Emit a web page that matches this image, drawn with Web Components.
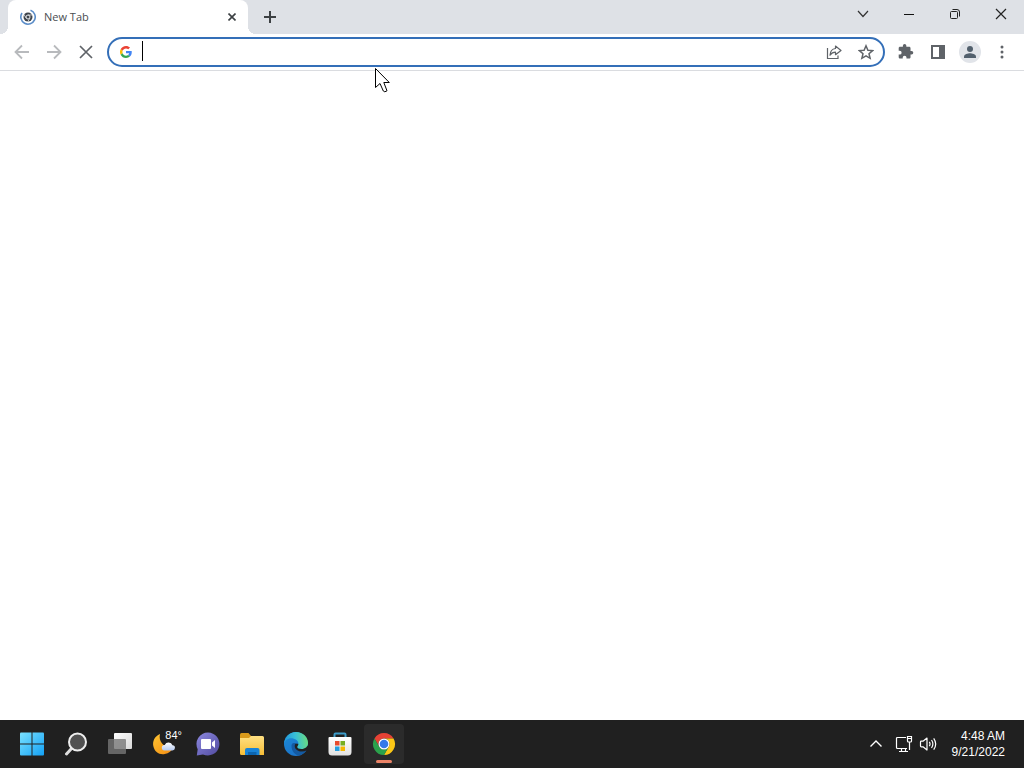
<!DOCTYPE html>
<html lang="en">
<head>
<meta charset="utf-8">
<title>New Tab</title>
<style>
html, body {
    height: 100%;
    margin: 0;
}

body {
    display: flex;
    flex-direction: column;
    background: #fff;
    font-family: "Open Sans", "Noto Sans", sans-serif;
    overflow: hidden;
}
</style>
</head>
<body>
<browser-window>
    <tab-strip slot="tabs">
        <browser-tab>New Tab</browser-tab>
    </tab-strip>
    <browser-toolbar slot="toolbar"></browser-toolbar>
</browser-window>
<task-bar>
    <task-button label="Start" icon="start"></task-button>
    <task-button label="Search" icon="search"></task-button>
    <task-button label="Task View" icon="taskview"></task-button>
    <task-button label="Widgets" icon="weather">84°</task-button>
    <task-button label="Chat" icon="chat"></task-button>
    <task-button label="File Explorer" icon="files"></task-button>
    <task-button label="Microsoft Edge" icon="edge"></task-button>
    <task-button label="Microsoft Store" icon="store"></task-button>
    <task-button label="Google Chrome" icon="chrome" active></task-button>
    <system-tray slot="tray">
        <span slot="time">4:48 AM</span>
        <span slot="date">9/21/2022</span>
    </system-tray>
</task-bar>
<mouse-pointer></mouse-pointer>

<script>
const taskIcons = {
    start: `<svg width="24" height="24" viewBox="0 0 24 24">
        <defs><linearGradient id="win" x1="0" y1="0" x2="24" y2="24" gradientUnits="userSpaceOnUse"><stop offset="0" stop-color="#7be2ff"/><stop offset="1" stop-color="#12a0f5"/></linearGradient></defs>
        <g fill="url(#win)"><path d="M0 1.500Q0 .5 1 .5h10.500v11H0z"/><path d="M12.500 .5H23q1 0 1 1v10H12.500z"/><path d="M0 12.500h11.500v11H1q-1 0-1-1z"/><path d="M12.500 12.500H24v10q0 1-1 1H12.500z"/></g></svg>`,
    search: `<svg width="24" height="24" viewBox="0 0 24 24">
        <path d="M8 16l-5.500 6" stroke="#dedede" stroke-width="3" stroke-linecap="round"/>
        <circle cx="13.500" cy="10" r="8.500" fill="#515151" stroke="#eee" stroke-width="2"/></svg>`,
    taskview: `<svg width="26" height="24" viewBox="0 0 26 24">
        <defs><linearGradient id="pane" x1="0" y1="0" x2="1" y2="1"><stop stop-color="#fff"/><stop offset="1" stop-color="#d8d8d8"/></linearGradient></defs>
        <rect x="7" y="1" width="18" height="16" rx="1" fill="url(#pane)"/>
        <rect x="1" y="7" width="18" height="15" rx="1" fill="#777" fill-opacity=".8"/></svg>`,
    weather: `<svg width="24" height="24" viewBox="0 0 24 24">
        <defs><linearGradient id="moon" x1="0" y1="0" x2="1" y2="1"><stop stop-color="#ffc532"/><stop offset="1" stop-color="#f28a12"/></linearGradient>
        <linearGradient id="cloud" x1="0" y1="0" x2="0" y2="1"><stop stop-color="#fff"/><stop offset="1" stop-color="#b4c9f0"/></linearGradient></defs>
        <path d="M8 2C2.500 4.500 .5 9 1.300 14c1.200 6 6 9 11.500 8 4-.7 7-3 8.500-6.500C13 17 6 10 8 2z" fill="url(#moon)"/>
        <path d="M12.500 18.500a2.800 2.800 0 0 1 .2-5.600A4.300 4.300 0 0 1 20.500 13.300a2.600 2.600 0 0 1-.3 5.200z" fill="url(#cloud)"/></svg>`,
    chat: `<svg width="24" height="24" viewBox="0 0 24 24">
        <defs><linearGradient id="bubble" x1="0" y1="0" x2="1" y2="1"><stop stop-color="#8d89e0"/><stop offset="1" stop-color="#514b9f"/></linearGradient></defs>
        <path d="M12 .5a11.500 11.500 0 1 1-5 21.900L.8 23.500l.9-6.300A11.500 11.500 0 0 1 12 .5z" fill="url(#bubble)"/>
        <rect x="5" y="7" width="10" height="10" rx="1" fill="#fff"/><path d="M16 10.500L19 8v8l-3-2.500z" fill="#fff"/></svg>`,
    files: `<svg width="26" height="24" viewBox="0 0 26 24">
        <defs><linearGradient id="folder" x1="0" y1="0" x2="0" y2="1"><stop stop-color="#ffe083"/><stop offset="1" stop-color="#f6bd36"/></linearGradient></defs>
        <path d="M1 2.500Q1 1 2.500 1h7L12 4v4H1z" fill="#d99a1b"/>
        <path d="M1 6h9l2-2h11.500Q25 4 25 5.500V23H2.500Q1 23 1 21.500z" fill="url(#folder)"/>
        <path d="M6 23v-5q0-2 2-2h10.500q2 0 2 2v5z" fill="#1883d7"/><path d="M9 23v-3h8.500v3z" fill="#0c65b0"/></svg>`,
    edge: `<svg width="26" height="26" viewBox="0 0 26 26">
        <defs><linearGradient id="wave" x1="0" y1=".5" x2="1" y2=".4"><stop stop-color="#2196dc"/><stop offset=".5" stop-color="#38bfd6"/><stop offset="1" stop-color="#6bdc7c"/></linearGradient>
        <linearGradient id="sea" x1="0" y1="0" x2=".6" y2="1"><stop stop-color="#1b8cd8"/><stop offset="1" stop-color="#1b72c9"/></linearGradient></defs>
        <circle cx="13" cy="13" r="12" fill="url(#sea)"/>
        <path d="M8.500 15c0 5 3.300 9 7.500 9.600 3-.8 5.500-2.400 7.400-5-3.400 1.200-7 1-9.700-1-2-1.700-2.700-4.300-1.200-6.200-2.300-1-4 0-4 2.600z" fill="#145aa2"/>
        <path d="M12.500 12.400c-1.500 2-1 4.500 1 6.300 2.800 2.200 7 2.300 10 .9L26 17l-2-3z" fill="#202020"/>
        <path d="M1 13C1.500 6 6.500 1 13 1c7 0 12 5 12 11 0 3.700-3 6-6.500 6-2.500 0-4.300-.8-4.300-2 0-.8 1.200-1.300 1.200-3.300C15.400 9.500 12 7.200 8 7.200 4.500 7.200 2 9.500 1 13z" fill="url(#wave)"/></svg>`,
    store: `<svg width="24" height="26" viewBox="0 0 24 26">
        <defs><linearGradient id="bag" x1="0" y1="0" x2="0" y2="1"><stop stop-color="#fff"/><stop offset="1" stop-color="#e1e1e1"/></linearGradient></defs>
        <path d="M6.500 8V3.500q0-1 1-1h9q1 0 1 1V8" fill="none" stroke="#3d9cc9" stroke-width="2"/>
        <path d="M.5 7q0-1 1-1h21q1 0 1 1v14q0 3.500-3.500 3.500H4Q.5 24.500.5 21z" fill="url(#bag)"/>
        <path d="M7 10h4.500v4.500H7z" fill="#e74b2d"/><path d="M12.500 10H17v4.500h-4.500z" fill="#76ae22"/><path d="M7 15.500h4.500V20H7z" fill="#239ee0"/><path d="M12.500 15.500H17V20h-4.500z" fill="#f5b700"/></svg>`,
    chrome: `<svg width="24" height="24" viewBox="0 0 24 24">
        <path d="M2.470 6.500A11 11 0 0 1 21.530 6.500H12a5.500 5.500 0 0 0-4.760 8.250z" fill="#e64235"/>
        <path d="M21.530 6.500A11 11 0 0 1 12 23l4.760-8.250A5.500 5.500 0 0 0 12 6.500z" fill="#fbc716"/>
        <path d="M12 23A11 11 0 0 1 2.470 6.500l4.770 8.250a5.500 5.500 0 0 0 9.520 0z" fill="#2ba24c"/>
        <circle cx="12" cy="12" r="5.500" fill="#fff"/><circle cx="12" cy="12" r="4.300" fill="#3479e8"/></svg>`
};

const buttonReset = `
    button {
        display: flex;
        align-items: center;
        justify-content: center;
        padding: 0;
        border: 0;
        background: none;
        color: inherit;
        font: inherit;
    }

    svg {
        display: block;
        flex: none;
    }
`;

class BrowserWindow extends HTMLElement {
    constructor() {
        super();
        this.attachShadow({ mode: 'open' });
        this.shadowRoot.innerHTML = `
        <style>
        :host {
            display: flex;
            flex-direction: column;
            flex: 1;
            min-height: 0;
            background: #fff;
        }

        main {
            flex: 1;
        }
        </style>
        <slot name="tabs"></slot>
        <slot name="toolbar"></slot>
        <main><slot></slot></main>
        `;
    }
}

class TabStrip extends HTMLElement {
    constructor() {
        super();
        this.attachShadow({ mode: 'open' });
        this.shadowRoot.innerHTML = `
        <style>
        ${buttonReset}
        :host {
            display: flex;
            height: 34px;
            padding-left: 8px;
            background: #dee1e6;
            color: #202124;
        }

        .new-tab {
            width: 28px;
            height: 34px;
            margin-left: 8px;
        }

        .controls {
            display: flex;
            margin-left: auto;
        }

        .controls button {
            width: 46px;
            height: 28px;
        }
        </style>
        <slot></slot>
        <button class="new-tab" aria-label="New tab">
            <svg width="12" height="12" viewBox="0 0 12 12"><path d="M6 0v12M0 6h12" stroke="#3c4043" stroke-width="2"/></svg>
        </button>
        <div class="controls">
            <button aria-label="Search tabs"><svg width="12" height="12" viewBox="0 0 12 12"><path d="M1 3l5 5.500L11 3" fill="none" stroke="#333" stroke-width="1.200"/></svg></button>
            <button aria-label="Minimize"><svg width="12" height="12" viewBox="0 0 12 12"><path d="M1 6.500h10" stroke="#111"/></svg></button>
            <button aria-label="Restore"><svg width="12" height="12" viewBox="0 0 12 12" fill="none" stroke="#222"><rect x="1.500" y="3.500" width="7" height="7" rx="1"/><path d="M3.500 1.500H8q2.500 0 2.500 2.500v4.500"/></svg></button>
            <button aria-label="Close"><svg width="12" height="12" viewBox="0 0 12 12"><path d="M1 1l10 10M11 1L1 11" stroke="#222" stroke-width="1.200"/></svg></button>
        </div>
        `;
    }
}

class BrowserTab extends HTMLElement {
    constructor() {
        super();
        this.attachShadow({ mode: 'open' });
        this.shadowRoot.innerHTML = `
        <style>
        ${buttonReset}
        :host {
            display: flex;
            align-items: center;
            gap: 8px;
            flex: 0 1 240px;
            height: 34px;
            box-sizing: border-box;
            padding: 0 8px 0 12px;
            border-radius: 8px 8px 0 0;
            background: #fff;
            color: #4a4d51;
            font-size: 11px;
            line-height: 16px;
            position: relative;
        }

        /* flared feet of the tab */
        :host::before,
        :host::after {
            content: "";
            position: absolute;
            bottom: 0;
            width: 8px;
            height: 8px;
        }

        :host::before {
            right: 100%;
            background: radial-gradient(circle at 0 0, #dee1e6 8px, #fff 8px);
        }

        :host::after {
            left: 100%;
            background: radial-gradient(circle at 100% 0, #dee1e6 8px, #fff 8px);
        }

        .title {
            flex: 1;
            white-space: nowrap;
            overflow: hidden;
        }

        button {
            width: 16px;
            height: 16px;
        }
        </style>
        <svg width="16" height="16" viewBox="0 0 16 16">
            <circle cx="8" cy="8" r="4.500" fill="#3f444b"/>
            <circle cx="8" cy="8" r="2" fill="#3f444b" stroke="#e4e7ea"/>
            <path d="M8 6h4.500M6.200 9.200L4 5.500M9.800 9.200L8 12.500" stroke="#e4e7ea" stroke-width=".8"/>
            <path d="M10.500 1.200A7.200 7.200 0 1 1 2 4" fill="none" stroke="#5b8dc8" stroke-width="1.600"/>
        </svg>
        <span class="title"><slot></slot></span>
        <button aria-label="Close tab"><svg width="8" height="8" viewBox="0 0 8 8"><path d="M0.500 .5l7 7M7.500 .5l-7 7" stroke="#3c4043" stroke-width="1.600"/></svg></button>
        `;
    }
}

class BrowserToolbar extends HTMLElement {
    constructor() {
        super();
        this.attachShadow({ mode: 'open' });
        this.shadowRoot.innerHTML = `
        <style>
        ${buttonReset}
        :host {
            display: flex;
            align-items: center;
            gap: 7px;
            height: 36px;
            padding: 0 8px;
            border-bottom: 1px solid #dadce0;
            background: #fff;
            color: #5f6368;
        }

        .group {
            display: flex;
            gap: 4px;
        }

        button {
            width: 28px;
            height: 28px;
            border-radius: 50%;
        }

        button:disabled {
            color: #b8babd;
        }
        </style>
        <div class="group">
            <button aria-label="Back" disabled><svg width="16" height="16" viewBox="0 0 16 16"><path d="M15 8H2M8 1.500L1.500 8 8 14.500" fill="none" stroke="currentColor" stroke-width="1.800"/></svg></button>
            <button aria-label="Forward" disabled><svg width="16" height="16" viewBox="0 0 16 16"><path d="M1 8h13M8 1.500L14.500 8 8 14.500" fill="none" stroke="currentColor" stroke-width="1.800"/></svg></button>
            <button aria-label="Stop"><svg width="14" height="14" viewBox="0 0 14 14"><path d="M1 1l12 12M13 1L1 13" stroke="currentColor" stroke-width="1.700"/></svg></button>
        </div>
        <omni-box></omni-box>
        <div class="group">
            <button aria-label="Extensions"><svg width="16" height="16" viewBox="1 1 23 23"><path fill="currentColor" d="M20.500 11H19V7c0-1.100-.9-2-2-2h-4V3.500a2.500 2.500 0 0 0-5 0V5H4c-1.100 0-2 .9-2 2v3.800h1.500a2.700 2.700 0 0 1 0 5.400H2V20c0 1.100.9 2 2 2h3.800v-1.500a2.700 2.700 0 0 1 5.400 0V22H17c1.100 0 2-.9 2-2v-4h1.500a2.500 2.500 0 0 0 0-5z"/></svg></button>
            <button aria-label="Side panel"><svg width="14" height="14" viewBox="0 0 14 14"><path fill="currentColor" fill-rule="evenodd" d="M0 0h14v14H0zM2 2v10h6V2z"/></svg></button>
            <button aria-label="Profile"><svg width="22" height="22" viewBox="0 0 22 22"><circle cx="11" cy="11" r="11" fill="#e1e4e9"/><circle cx="11" cy="8" r="3" fill="#52606d"/><path d="M5 17v-1.500c0-2 4-3.200 6-3.200s6 1.200 6 3.200V17z" fill="#52606d"/></svg></button>
            <button aria-label="Menu"><svg width="4" height="14" viewBox="0 0 4 14" fill="currentColor"><circle cx="2" cy="2" r="1.500"/><circle cx="2" cy="7" r="1.500"/><circle cx="2" cy="12" r="1.500"/></svg></button>
        </div>
        `;
    }
}

class OmniBox extends HTMLElement {
    constructor() {
        super();
        this.attachShadow({ mode: 'open' });
        this.shadowRoot.innerHTML = `
        <style>
        ${buttonReset}
        :host {
            display: flex;
            align-items: center;
            flex: 1;
            min-width: 0;
            height: 30px;
            box-sizing: border-box;
            padding: 0 3px 0 11px;
            border: 2px solid #346fb8;
            border-radius: 15px;
            background: #fff;
            color: #5f6368;
        }

        .caret {
            width: 1px;
            height: 20px;
            margin: 0 0 2px 10px;
            background: #000;
        }

        input {
            flex: 1;
            min-width: 0;
            height: 24px;
            padding: 0;
            border: 0;
            outline: 0;
            background: none;
            font: inherit;
            font-size: 14px;
            color: #202124;
            caret-color: transparent;
        }

        .actions {
            display: flex;
            gap: 4px;
        }

        button {
            width: 28px;
            height: 26px;
        }
        </style>
        <svg width="12" height="12" viewBox="0 0 48 48">
            <path fill="#ea4335" d="M24 9.500c3.500 0 6.700 1.200 9.200 3.600l6.900-6.900C35.900 2.400 30.500 0 24 0 14.600 0 6.500 5.400 2.600 13.200l8 6.200C12.400 13.700 17.700 9.500 24 9.500z"/>
            <path fill="#4285f4" d="M47 24.600c0-1.600-.2-3.100-.4-4.600H24v9h12.900c-.6 3-2.300 5.500-4.800 7.200l7.700 6C44.400 38 47 32 47 24.600z"/>
            <path fill="#fbbc05" d="M10.500 28.600a14.500 14.500 0 0 1 0-9.200l-8-6.200a24 24 0 0 0 0 21.600z"/>
            <path fill="#34a853" d="M24 48c6.500 0 11.900-2.100 15.900-5.800l-7.800-6c-2.100 1.400-4.900 2.300-8.100 2.300-6.300 0-11.600-4.200-13.500-9.900l-8 6.200C6.500 42.600 14.600 48 24 48z"/>
        </svg>
        <span class="caret"></span>
        <input type="text" aria-label="Address and search bar">
        <div class="actions">
            <button aria-label="Share this page"><svg width="16" height="16" viewBox="0 0 16 16" fill="none" stroke="currentColor" stroke-width="1.200"><path d="M1.500 4v10.500H12v-3" /><path d="M9.500 2l5.500 4.500-5.500 4.200V8.200c-2.500 0-4 .8-5.500 3 .2-4 2-6.300 5.500-6.700z" stroke-linejoin="round"/></svg></button>
            <button aria-label="Bookmark this tab"><svg width="16" height="16" viewBox="0 0 16 16"><path d="M8 1.800l1.900 4.400 4.700.4-3.600 3.100 1.100 4.600L8 11.900l-4.100 2.400L5 9.700 1.400 6.600l4.700-.4z" fill="none" stroke="currentColor" stroke-width="1.500"/></svg></button>
        </div>
        `;
    }
}

class TaskBar extends HTMLElement {
    constructor() {
        super();
        this.attachShadow({ mode: 'open' });
        this.shadowRoot.innerHTML = `
        <style>
        :host {
            display: block;
            background: #202020;
            color: #fff;
            font-family: "Liberation Sans", sans-serif;
        }

        nav {
            display: flex;
            align-items: center;
            gap: 4px;
            height: 48px;
            padding: 0 19px 0 12px;
        }

        ::slotted(system-tray) {
            margin-left: auto;
        }
        </style>
        <nav aria-label="Taskbar">
            <slot></slot>
            <slot name="tray"></slot>
        </nav>
        `;
    }
}

class TaskButton extends HTMLElement {
    constructor() {
        super();
        this.attachShadow({ mode: 'open' });
    }

    connectedCallback() {
        this.shadowRoot.innerHTML = `
        <style>
        ${buttonReset}
        :host {
            display: block;
            position: relative;
            font-size: 11px;
            line-height: 12px;
        }

        button {
            width: 40px;
            height: 40px;
            border-radius: 4px;
        }

        :host([active]) button {
            background: #2b2b2b;
        }

        :host([active])::after {
            content: "";
            position: absolute;
            left: 12px;
            bottom: 1px;
            width: 16px;
            height: 3px;
            border-radius: 2px;
            background: #ec8468;
        }

        .badge {
            position: absolute;
            top: 5px;
            right: 2px;
            border-radius: 6px;
            background: #202020;
        }
        </style>
        <button aria-label="${this.getAttribute('label')}">
            ${taskIcons[this.getAttribute('icon')]}
            <span class="badge"><slot></slot></span>
        </button>
        `;
    }
}

class SystemTray extends HTMLElement {
    constructor() {
        super();
        this.attachShadow({ mode: 'open' });
        this.shadowRoot.innerHTML = `
        <style>
        ${buttonReset}
        :host {
            display: flex;
            align-items: center;
            font-size: 12px;
            line-height: 16px;
        }

        button {
            width: 24px;
            height: 40px;
        }

        .overflow {
            width: 32px;
        }

        .clock {
            width: auto;
            flex-direction: column;
            align-items: flex-end;
            margin-left: 12px;
        }
        </style>
        <button class="overflow" aria-label="Show hidden icons"><svg width="14" height="14" viewBox="0 0 14 14"><path d="M1.500 9.500L7 4l5.500 5.500" fill="none" stroke="#fff" stroke-width="1.400"/></svg></button>
        <button aria-label="Network"><svg width="18" height="18" viewBox="0 0 18 18" fill="none" stroke="#fff" stroke-width="1.200"><path d="M11 2.500H2.500q-1 0-1 1v9q0 1 1 1h9.500M4 16.500h9M6.500 13.500v3M10.500 13.500v3"/><path d="M12.500 1.500h4V6q0 1-1 1h-2q-1 0-1-1zM12.500 3.500h4M14.500 7v8"/></svg></button>
        <button aria-label="Volume"><svg width="18" height="16" viewBox="0 0 18 16" fill="none" stroke="#fff" stroke-width="1.200"><path d="M1.500 6v4q0 .8.800.8H4l4 3.200V2L4 5.200H2.300q-.8 0-.8.8z" stroke-linejoin="round"/><path d="M10.300 5.800q1.500 2.200 0 4.400M12.500 4q2.800 4 0 8M14.700 2.300q4 5.700 0 11.400"/></svg></button>
        <button class="clock">
            <slot name="time"></slot>
            <slot name="date"></slot>
        </button>
        `;
    }
}

class MousePointer extends HTMLElement {
    constructor() {
        super();
        this.attachShadow({ mode: 'open' });
        this.shadowRoot.innerHTML = `
        <style>
        :host {
            position: absolute;
            left: 375px;
            top: 67px;
            pointer-events: none;
        }

        svg {
            display: block;
        }
        </style>
        <svg width="16" height="28" viewBox="0 0 16 28"><path d="M.5 1.500v19l4.500-4 3.300 7.500q1.200 1.700 3.700-.2L8.800 15.500h5.500z" fill="#fff" stroke="#000"/></svg>
        `;
    }
}

customElements.define('browser-window', BrowserWindow);
customElements.define('tab-strip', TabStrip);
customElements.define('browser-tab', BrowserTab);
customElements.define('browser-toolbar', BrowserToolbar);
customElements.define('omni-box', OmniBox);
customElements.define('task-bar', TaskBar);
customElements.define('task-button', TaskButton);
customElements.define('system-tray', SystemTray);
customElements.define('mouse-pointer', MousePointer);
</script>
</body>
</html>
